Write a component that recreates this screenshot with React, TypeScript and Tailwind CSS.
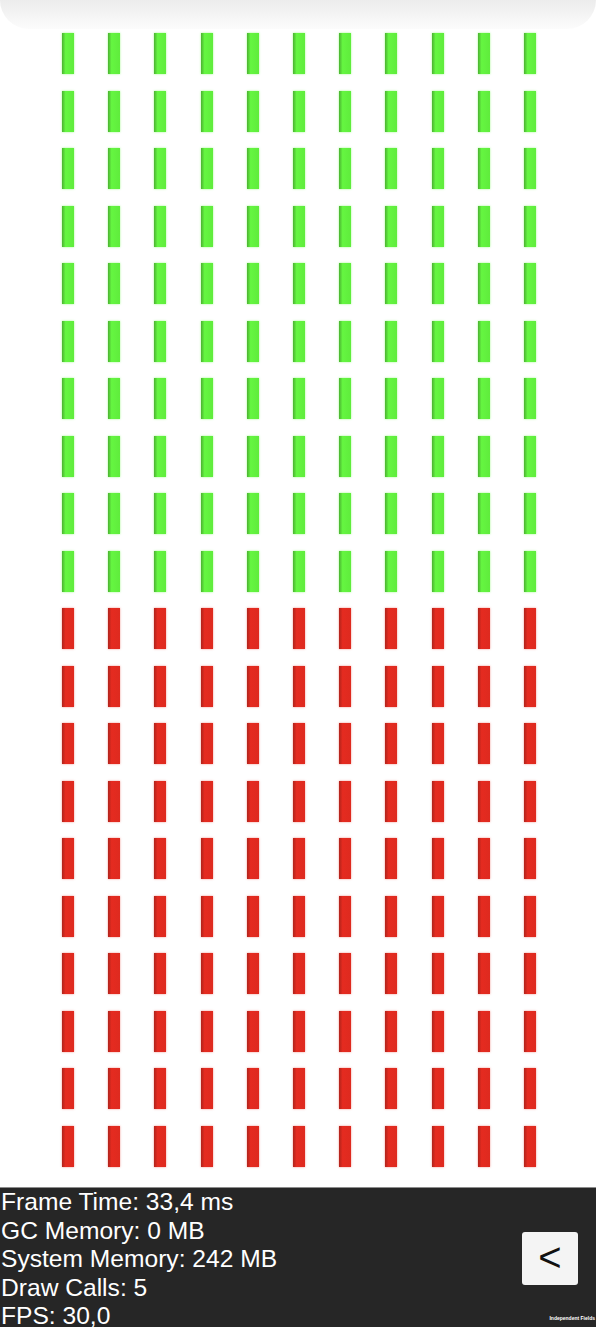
const COLS = 11;
const GREEN_ROWS = 10;
const RED_ROWS = 10;

const stats = [
  "Frame Time: 33,4 ms",
  "GC Memory: 0 MB",
  "System Memory: 242 MB",
  "Draw Calls: 5",
  "FPS: 30,0",
];

function Bar({ red }: { red?: boolean }) {
  return red ? (
    <div className="h-[41px] w-[12px] bg-gradient-to-r from-[#b0231b] from-0% via-[#e52b20] via-30% to-[#de2a1f] shadow-[0_0_2px_rgba(228,43,32,0.5)]" />
  ) : (
    <div className="h-[41px] w-[12px] bg-gradient-to-r from-[#4bb231] from-0% via-[#65f641] via-30% to-[#5fec3c] shadow-[0_0_2px_rgba(99,245,63,0.6)]" />
  );
}

function BarRow({ red }: { red?: boolean }) {
  return (
    <div className="flex gap-x-[34.2px]">
      {Array.from({ length: COLS }).map((_, i) => (
        <Bar key={i} red={red} />
      ))}
    </div>
  );
}

export default function App() {
  return (
    <div
      className="relative flex h-[1327px] w-[596px] flex-col overflow-hidden bg-white"
      style={{ fontFamily: '"Liberation Sans", Arial, sans-serif' }}
    >
      <div className="h-[29px] w-full rounded-b-[40px] bg-gradient-to-b from-[#ececec] to-[#fcfcfc]" />

      <div className="mt-[4px] flex flex-col gap-y-[16.5px] pl-[62px]">
        {Array.from({ length: GREEN_ROWS }).map((_, i) => (
          <BarRow key={"g" + i} />
        ))}
        {Array.from({ length: RED_ROWS }).map((_, i) => (
          <BarRow key={"r" + i} red />
        ))}
      </div>

      <div className="relative mt-auto flex h-[140px] justify-between border-t border-[#8c8c8c] bg-[#262626]">
        <div className="pl-[1px] text-[24.6px] leading-[28.6px] text-white">
          {stats.map((s) => (
            <div key={s} className="whitespace-nowrap">
              {s}
            </div>
          ))}
        </div>
        <button className="mr-[18px] mt-[44px] flex h-[53px] w-[56px] items-center justify-center rounded-[3px] bg-[#f4f4f4] pb-[3px] text-[40px] leading-none text-[#111]">
          &lt;
        </button>
        <div className="absolute bottom-[6px] right-[1px] text-[5px] font-bold leading-none text-white">
          Independent Fields
        </div>
      </div>
    </div>
  );
}
